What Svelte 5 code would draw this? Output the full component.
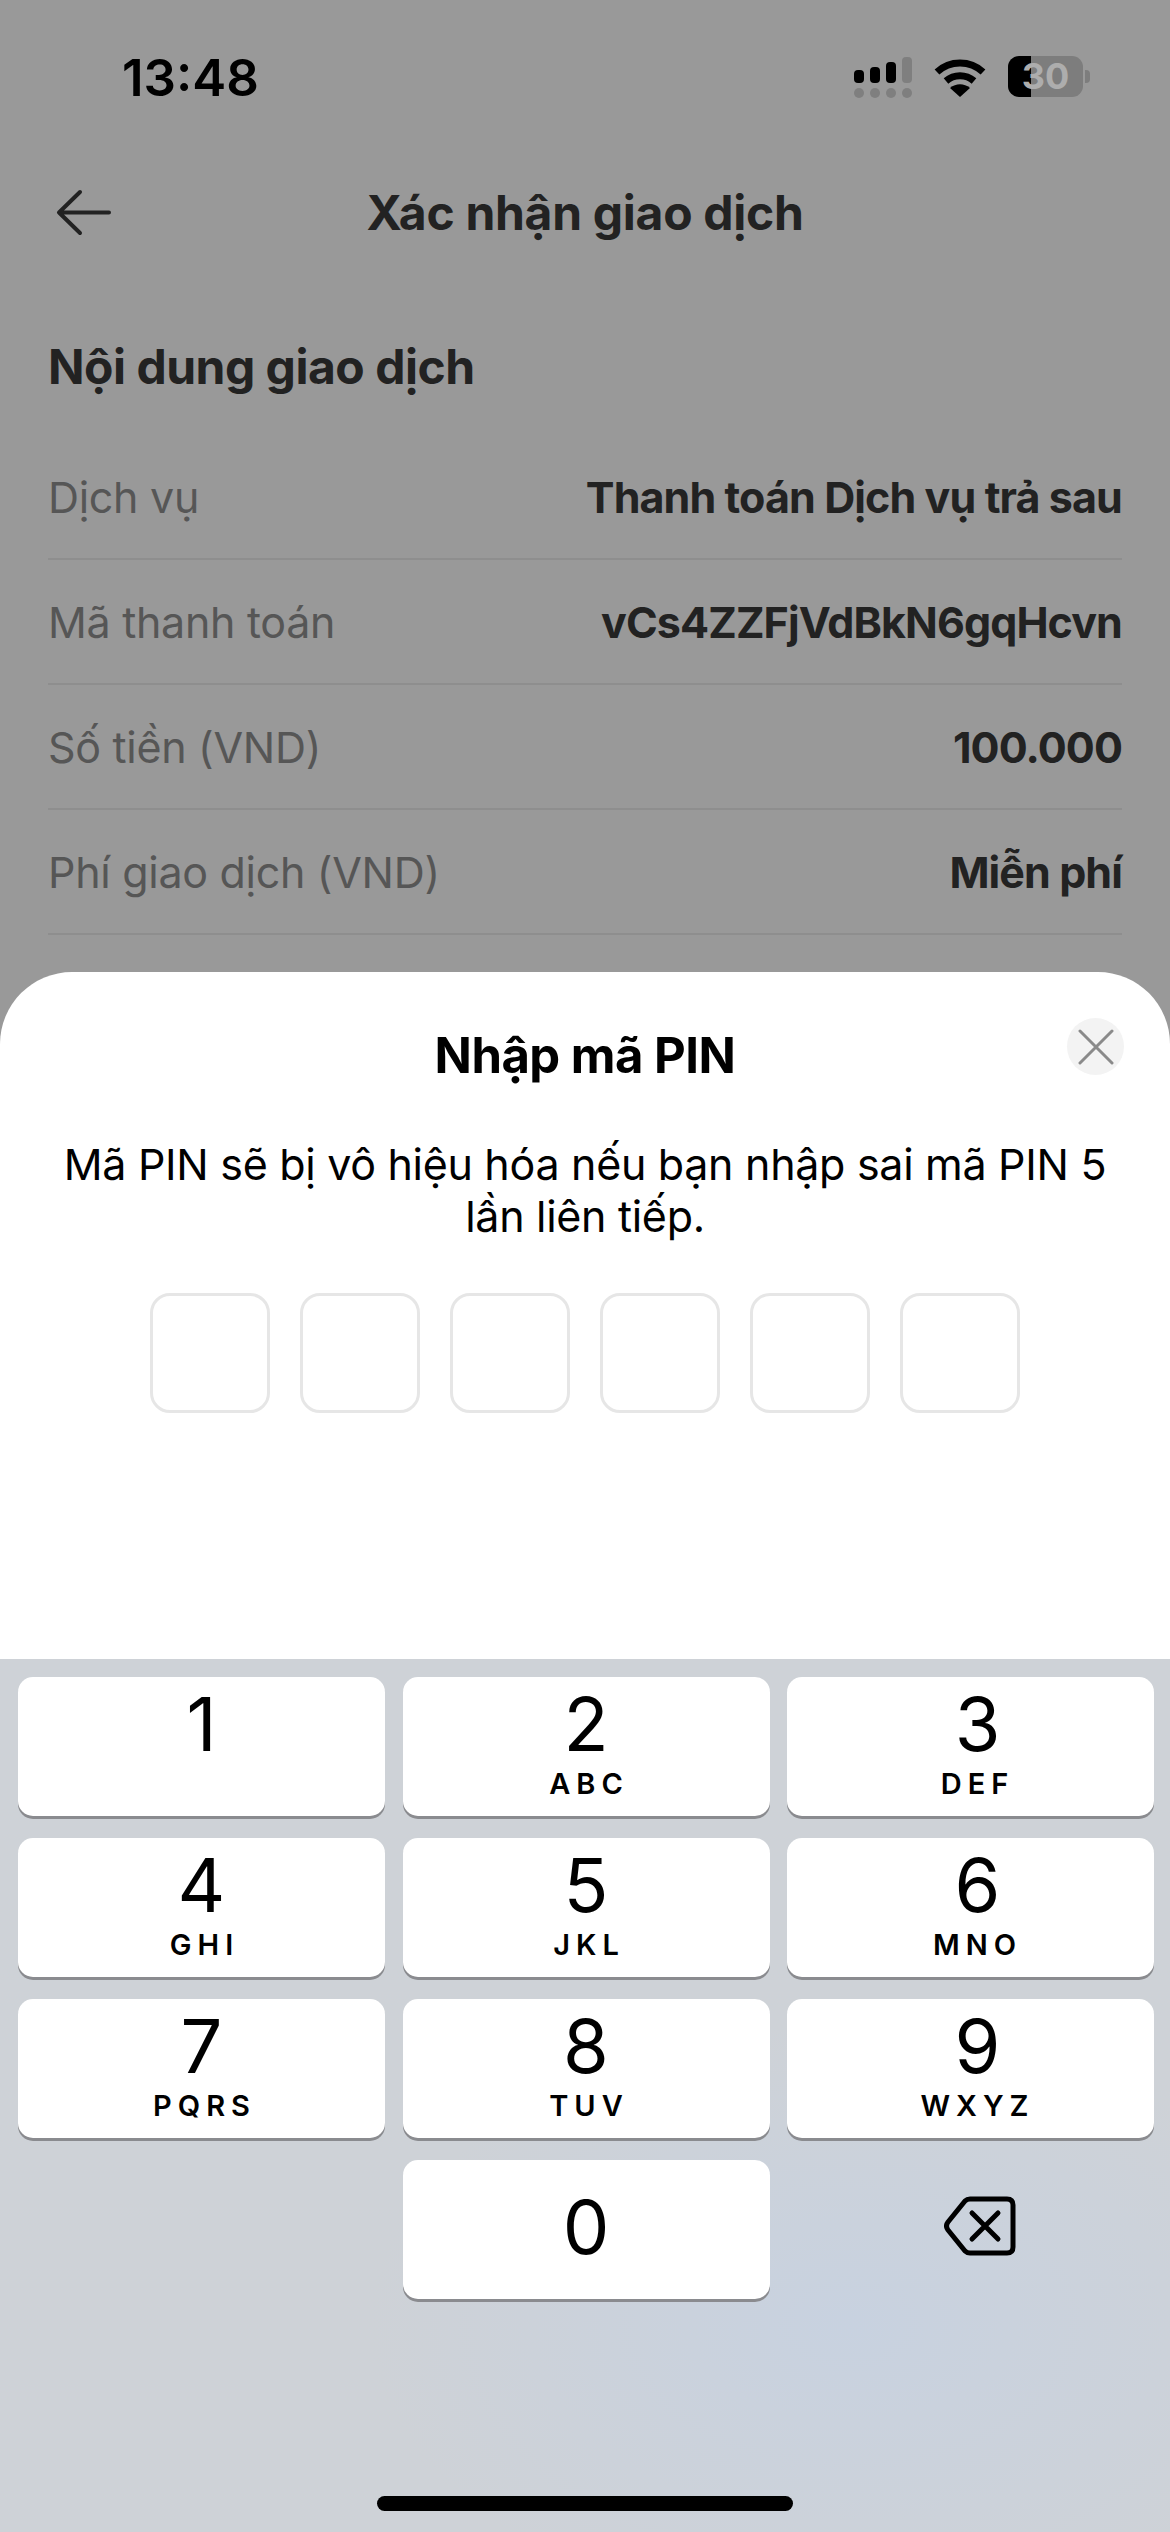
<script>
	const rows = [
		{ label: 'Dịch vụ', value: 'Thanh toán Dịch vụ trả sau' },
		{ label: 'Mã thanh toán', value: 'vCs4ZZFjVdBkN6gqHcvn' },
		{ label: 'Số tiền (VND)', value: '100.000' },
		{ label: 'Phí giao dịch (VND)', value: 'Miễn phí' }
	];

	const keys = [
		{ digit: '1', letters: '' },
		{ digit: '2', letters: 'ABC' },
		{ digit: '3', letters: 'DEF' },
		{ digit: '4', letters: 'GHI' },
		{ digit: '5', letters: 'JKL' },
		{ digit: '6', letters: 'MNO' },
		{ digit: '7', letters: 'PQRS' },
		{ digit: '8', letters: 'TUV' },
		{ digit: '9', letters: 'WXYZ' }
	];

	const pinSlots = [0, 1, 2, 3, 4, 5];
</script>

<div class="page">
	<div class="behind">
		<div class="status">
			<span class="time">13:48</span>
			<div class="status-icons">
				<svg width="60" height="44" viewBox="0 0 60 44" class="signal">
					<rect x="0" y="14" width="10" height="13" rx="4" fill="#000" />
					<rect x="16" y="11" width="10" height="16" rx="4" fill="#000" />
					<rect x="32" y="6" width="10" height="21" rx="4" fill="#000" />
					<rect x="48" y="1" width="10" height="26" rx="4" fill="#7f7f7f" />
					<circle cx="5" cy="37" r="5" fill="#7f7f7f" />
					<circle cx="21" cy="37" r="5" fill="#7f7f7f" />
					<circle cx="37" cy="37" r="5" fill="#7f7f7f" />
					<circle cx="53" cy="37" r="5" fill="#7f7f7f" />
				</svg>
				<svg width="52" height="38" viewBox="0 0 52 38" class="wifi">
					<path d="M3 13 C16 1 36 1 49 13" fill="none" stroke="#000" stroke-width="7" />
					<path d="M12 22 C20 15 32 15 40 22" fill="none" stroke="#000" stroke-width="7" />
					<path d="M16 29 C22 24 30 24 36 29 L26 38 Z" fill="#000" />
				</svg>
				<div class="battery">
					<div class="battery-body">
						<div class="battery-fill"></div>
						<span class="battery-level">30</span>
					</div>
					<div class="battery-nub"></div>
				</div>
			</div>
		</div>

		<div class="nav">
			<svg class="back" width="58" height="48" viewBox="0 0 58 48">
				<path d="M25 3 L4 23.5 L25 44 M4 23.5 H54" fill="none" stroke="#222" stroke-width="4" stroke-linecap="round" stroke-linejoin="round" />
			</svg>
			<h1>Xác nhận giao dịch</h1>
		</div>

		<h2>Nội dung giao dịch</h2>

		<div class="details">
			{#each rows as row}
				<div class="row">
					<span class="label">{row.label}</span>
					<span class="value">{row.value}</span>
				</div>
			{/each}
		</div>
	</div>

	<div class="sheet">
		<div class="sheet-head">
			<h3>Nhập mã PIN</h3>
			<button class="close" aria-label="Đóng">
				<svg width="36" height="36" viewBox="0 0 36 36">
					<path d="M2 2 L34 34 M34 2 L2 34" stroke="#8a8a8a" stroke-width="3" stroke-linecap="round" />
				</svg>
			</button>
		</div>
		<p class="hint">Mã PIN sẽ bị vô hiệu hóa nếu bạn nhập sai mã PIN 5 lần liên tiếp.</p>
		<div class="pin">
			{#each pinSlots as slot (slot)}
				<div class="pin-box"></div>
			{/each}
		</div>
	</div>

	<div class="keyboard">
		<div class="keys">
			{#each keys as key}
				<div class="key">
					<span class="digit">{key.digit}</span>
					<span class="letters">{key.letters}</span>
				</div>
			{/each}
			<div class="blank"></div>
			<div class="key zero">
				<span class="digit">0</span>
			</div>
			<div class="blank delete">
				<svg width="72" height="60" viewBox="0 0 72 60">
					<path d="M26 3 H63 Q69 3 69 9 V51 Q69 57 63 57 H26 Q23 57 21 55 L4 34 Q1 30 4 26 L21 5 Q23 3 26 3 Z" fill="none" stroke="#000" stroke-width="5" stroke-linejoin="round" />
					<path d="M28 17 L54 43 M54 17 L28 43" stroke="#000" stroke-width="5" stroke-linecap="round" />
				</svg>
			</div>
		</div>
		<div class="home"></div>
	</div>
</div>

<style>
	:global(body) {
		margin: 0;
		font-family: Inter, 'Liberation Sans', sans-serif;
	}

	.page {
		width: 1170px;
		height: 2532px;
		display: flex;
		flex-direction: column;
		background: #999;
		overflow: hidden;
	}

	.behind {
		height: 972px;
		flex: none;
		overflow: hidden;
		padding: 0 48px;
		box-sizing: border-box;
	}

	.status {
		height: 156px;
		display: flex;
		justify-content: space-between;
		align-items: flex-start;
		padding-top: 50px;
		box-sizing: border-box;
	}

	.time {
		margin-left: 74px;
		font-size: 51px;
		line-height: 56px;
		font-weight: 600;
		color: #000;
	}

	.status-icons {
		display: flex;
		align-items: flex-start;
		margin-right: 32px;
		margin-top: 6px;
	}

	.signal {
		margin-right: 20px;
	}

	.wifi {
		margin-top: 3px;
		margin-right: 22px;
	}

	.battery {
		display: flex;
		align-items: center;
	}

	.battery-body {
		position: relative;
		width: 75px;
		height: 41px;
		border-radius: 11px;
		background: #7d7d7d;
		display: flex;
		align-items: center;
		justify-content: center;
	}

	.battery-fill {
		position: absolute;
		left: 0;
		top: 0;
		bottom: 0;
		width: 23px;
		border-radius: 11px 0 0 11px;
		background: #000;
	}

	.battery-level {
		position: relative;
		font-size: 36px;
		line-height: 41px;
		font-weight: 700;
		color: #adadad;
	}

	.battery-nub {
		width: 5px;
		height: 13px;
		margin-left: 2px;
		border-radius: 0 4px 4px 0;
		background: #7d7d7d;
	}

	.nav {
		position: relative;
		height: 112px;
		display: flex;
		align-items: center;
		justify-content: center;
	}

	.back {
		position: absolute;
		left: 7px;
		top: 33px;
	}

	h1 {
		margin: 0;
		font-size: 48px;
		font-weight: 650;
		letter-spacing: -0.3px;
		color: #222;
	}

	h2 {
		margin: 0;
		padding-top: 67px;
		font-size: 48px;
		line-height: 64px;
		font-weight: 650;
		letter-spacing: -0.5px;
		color: #222;
	}

	.details {
		margin-top: 36px;
	}

	.row {
		height: 125px;
		display: flex;
		justify-content: space-between;
		align-items: center;
		border-bottom: 2px solid #8e8e8e;
		box-sizing: border-box;
		font-size: 43px;
	}

	.label {
		color: #565656;
		letter-spacing: -0.3px;
	}

	.value {
		font-weight: 650;
		letter-spacing: -0.9px;
		color: #222;
	}

	.sheet {
		height: 687px;
		flex: none;
		box-sizing: border-box;
		background: #fff;
		border-radius: 72px 72px 0 0;
		padding-top: 46px;
	}

	.sheet-head {
		position: relative;
		height: 64px;
		display: flex;
		align-items: center;
		justify-content: center;
	}

	h3 {
		margin: 10px 0 0;
		font-size: 49px;
		font-weight: 700;
		letter-spacing: -0.5px;
		color: #000;
	}

	.close {
		position: absolute;
		right: 46px;
		top: 0;
		width: 57px;
		height: 57px;
		padding: 0;
		border: none;
		border-radius: 50%;
		background: #f3f3f3;
		display: flex;
		align-items: center;
		justify-content: center;
	}

	.hint {
		margin: 56px 40px 0;
		text-align: center;
		font-size: 43px;
		line-height: 52px;
		letter-spacing: -0.3px;
		color: #000;
	}

	.pin {
		margin-top: 51px;
		display: flex;
		justify-content: center;
		gap: 30px;
	}

	.pin-box {
		width: 120px;
		height: 120px;
		box-sizing: border-box;
		border: 3px solid #e6e6e6;
		border-radius: 20px;
	}

	.keyboard {
		flex: 1;
		display: flex;
		flex-direction: column;
		background:
			radial-gradient(ellipse 480px 300px at 850px 665px, #c8d2e0 0%, rgba(200, 210, 224, 0) 100%) no-repeat,
			#ced2d7;
		padding: 18px 18px 0;
		box-sizing: border-box;
	}

	.keys {
		display: grid;
		grid-template-columns: repeat(3, 367px);
		grid-auto-rows: 139px;
		column-gap: 17.5px;
		row-gap: 22px;
	}

	.key {
		display: flex;
		flex-direction: column;
		align-items: center;
		background: #fff;
		border-radius: 15px;
		box-shadow: 0 3px 0 #8a8b8f;
		color: #000;
	}

	.key:nth-child(3n) {
		padding-left: 8px;
		box-sizing: border-box;
	}

	.key:nth-child(3n) .digit {
		margin-left: 6px;
	}

	.digit {
		font-size: 74px;
		line-height: 90px;
		font-weight: 400;
		margin-top: 2px;
	}

	.letters {
		font-size: 29px;
		line-height: 34px;
		font-weight: 600;
		letter-spacing: 6px;
		margin-top: -2px;
		margin-right: -6px;
	}

	.zero {
		justify-content: center;
	}

	.zero .digit {
		margin-top: -5px;
	}

	.delete {
		display: flex;
		justify-content: center;
		padding-top: 36px;
		padding-left: 18px;
		box-sizing: border-box;
	}

	.home {
		width: 416px;
		height: 15px;
		margin: 197px auto 0;
		border-radius: 8px;
		background: #000;
	}
</style>
